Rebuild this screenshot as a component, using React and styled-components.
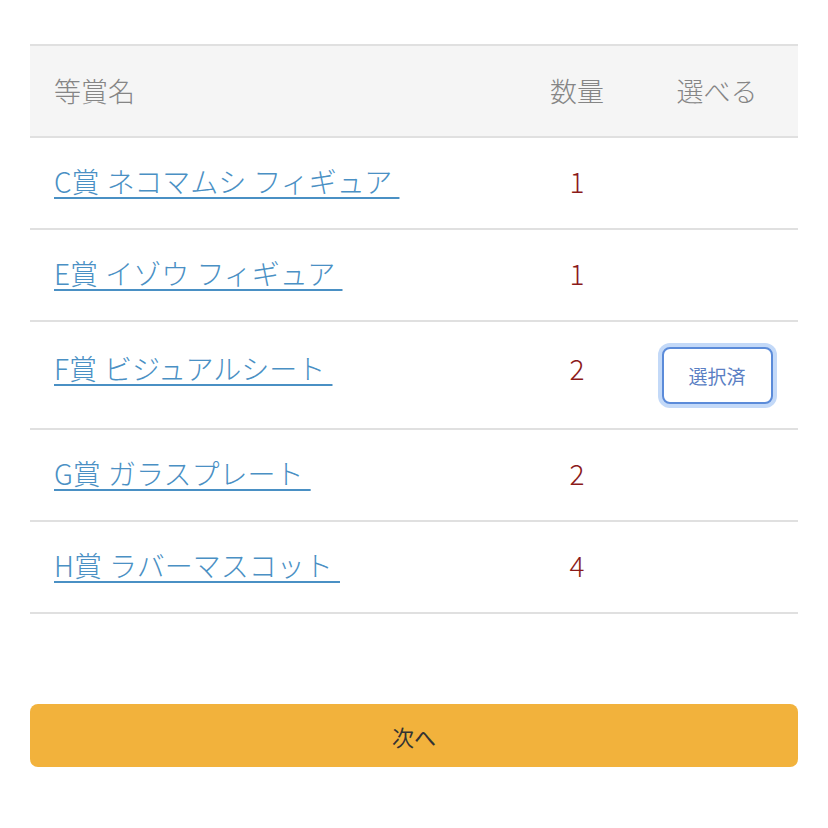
import React from "react";
import styled, { createGlobalStyle } from "styled-components";

const GlobalStyle = createGlobalStyle`
  body {
    margin: 0;
    background: #fff;
    font-family: "Noto Sans CJK JP", "Noto Sans", sans-serif;
  }
`;

const Page = styled.div`
  padding: 44px 30px 0;
`;

const Table = styled.div`
  border-top: 2px solid #e0e0e0;
`;

const Row = styled.div`
  box-sizing: border-box;
  display: grid;
  grid-template-columns: 1fr 118px 162px;
  align-items: center;
  min-height: 92px;
  border-bottom: 2px solid #e0e0e0;
  background: ${(p) => (p.head ? "#f5f5f5" : "#fff")};
`;

const HeadCell = styled.div`
  font-size: 27px;
  font-weight: 300;
  line-height: 40px;
  color: #858585;
  padding-left: ${(p) => (p.left ? "24px" : "0")};
  text-align: ${(p) => (p.left ? "left" : "center")};
`;

const NameCell = styled.div`
  padding-left: 24px;
  line-height: 40px;
  height: 40px;
  margin-bottom: ${(p) => (p.raised ? "14px" : "4px")};
`;

const PrizeLink = styled.a`
  font-size: 28px;
  font-weight: 300;
  color: #4a90c4;
  text-decoration: underline;
  text-underline-offset: 4px;
  text-decoration-thickness: 2px;
  white-space: pre;
  word-spacing: 1px;
  cursor: pointer;
`;

const Qty = styled.div`
  font-size: 28px;
  font-weight: 300;
  line-height: 40px;
  color: #8b1a1a;
  text-align: center;
  margin-bottom: ${(p) => (p.raised ? "14px" : "4px")};
`;

const SelectCell = styled.div`
  display: flex;
  justify-content: center;
  padding: ${(p) => (p.filled ? "25px 0 24px" : "0")};
`;

const SelectedButton = styled.button`
  width: 111px;
  height: 57px;
  border: 2px solid #5b8bd9;
  border-radius: 8px;
  background: #fff;
  box-shadow: 0 0 0 4px #c3d9f8;
  color: #5b7fc4;
  font-family: inherit;
  font-size: 19px;
  padding: 0;
  cursor: pointer;
`;

const NextButton = styled.button`
  display: block;
  width: 100%;
  height: 63px;
  margin-top: 90px;
  border: none;
  border-radius: 8px;
  background: #f2b23c;
  color: #333;
  font-family: inherit;
  font-size: 22px;
  cursor: pointer;
`;

const prizes = [
  { name: "C賞 ネコマムシ フィギュア ", qty: 1 },
  { name: "E賞 イゾウ フィギュア ", qty: 1 },
  { name: "F賞 ビジュアルシート ", qty: 2, selected: true },
  { name: "G賞 ガラスプレート ", qty: 2 },
  { name: "H賞 ラバーマスコット ", qty: 4 },
];

export default function App() {
  return (
    <Page>
      <GlobalStyle />
      <Table>
        <Row head>
          <HeadCell left>等賞名</HeadCell>
          <HeadCell>数量</HeadCell>
          <HeadCell>選べる</HeadCell>
        </Row>
        {prizes.map((p) => (
          <Row key={p.name}>
            <NameCell raised={p.selected}>
              <PrizeLink>{p.name}</PrizeLink>
            </NameCell>
            <Qty raised={p.selected}>{p.qty}</Qty>
            <SelectCell filled={p.selected}>
              {p.selected && <SelectedButton>選択済</SelectedButton>}
            </SelectCell>
          </Row>
        ))}
      </Table>
      <NextButton>次へ</NextButton>
    </Page>
  );
}
